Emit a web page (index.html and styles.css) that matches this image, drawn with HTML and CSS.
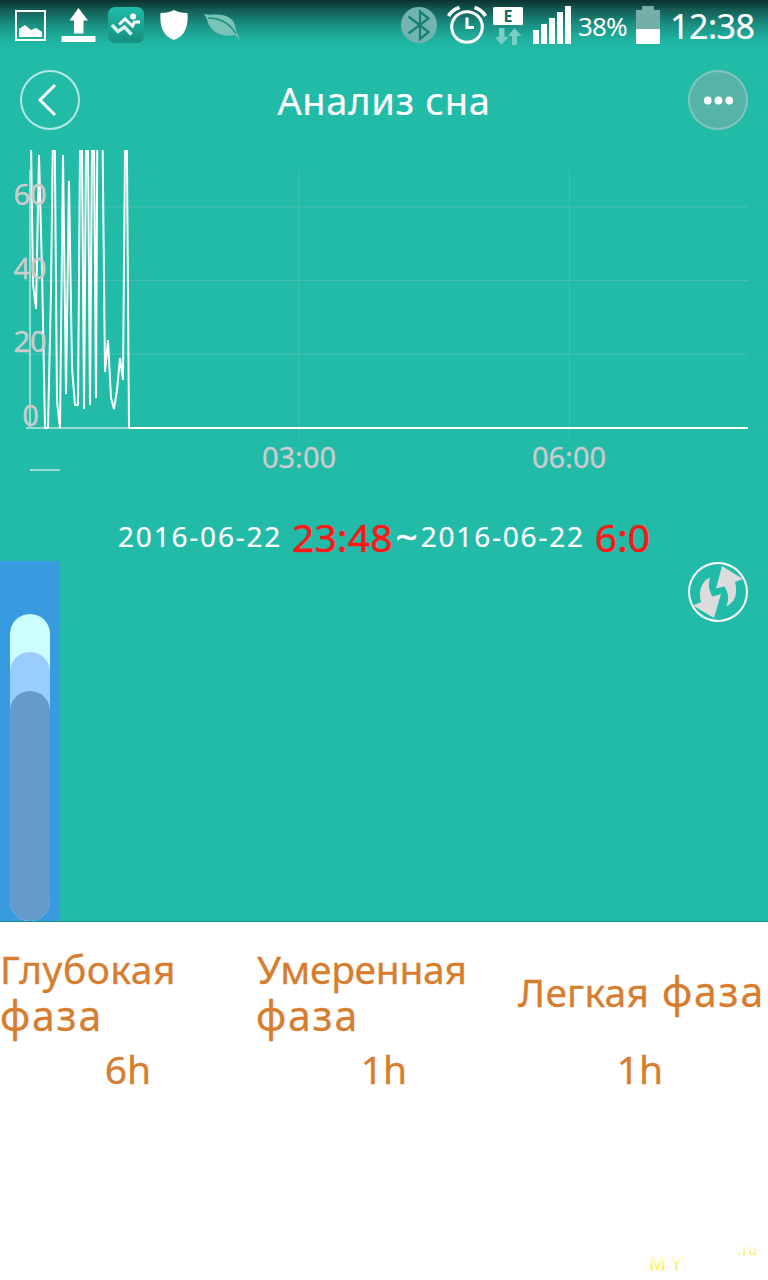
FILE: index.html
```html
<!DOCTYPE html>
<html lang="ru">
<head>
<meta charset="UTF-8">
<meta name="viewport" content="width=device-width, initial-scale=1.0">
<title>Анализ сна</title>
<link rel="stylesheet" href="styles.css">
</head>
<body>

  <div class="top">
    <div class="status-bar">
      <svg class="status-left" width="256" height="50" viewBox="0 0 256 50">
        <defs>
          <linearGradient id="app" x1="0" y1="0" x2="0" y2="1">
            <stop offset="0" stop-color="#21bba9"/>
            <stop offset="1" stop-color="#168f81"/>
          </linearGradient>
        </defs>
        <rect x="16" y="11" width="29" height="29" fill="none" stroke="#fff" stroke-width="2"/>
        <path d="M19 37V29L25 25L31 30L36 28L42 32V37Z" fill="#fff"/>
        <path d="M78.500 8L88 20.500H83.500V33.500H74V20.500H69.500ZM61.500 36H95.500V42H61.500Z" fill="#fff"/>
        <rect x="108" y="7" width="36" height="36" rx="7" fill="url(#app)"/>
        <path d="M119 24.500L125 19L132.500 26L134.500 22H140" fill="none" stroke="#fff" stroke-width="3"/>
        <path d="M112 25L118 31.500L124.500 27L131.500 34.500" fill="none" stroke="#d6f1ee" stroke-width="3.500"/>
        <circle cx="133" cy="16.500" r="3" fill="#fff"/>
        <path d="M174 10Q179 13 187.500 13C188.500 26 185 36 174 40C163 36 159.500 26 160.500 13Q169 13 174 10Z" fill="#fff"/>
        <path d="M204 14C211 16 222 12 231 19C236 23 235 29 237 33L240 40L235 35C225 37 216 34 212 29C207 24 208 19 204 14Z" fill="#79c3b8"/>
        <path d="M208 18C219 18 229 22 236 34" fill="none" stroke="#1d8f83" stroke-width="1.400"/>
      </svg>
      <div class="status-right">
        <svg width="184" height="50" viewBox="398 0 184 50">
          <circle cx="419" cy="25" r="18" fill="#72b5ae"/>
          <path d="M408.500 16.500L428.500 32L420 39V11.500L428.500 18.500L408.500 33.500" fill="none" stroke="#177f75" stroke-width="2.300"/>
          <g fill="none" stroke="#fff">
            <circle cx="467" cy="27" r="15.300" stroke-width="3"/>
            <path d="M467 17.500V27.500H474" stroke-width="3"/>
            <path d="M448.500 16Q452 10 459.500 7.500M485.500 16Q482 10 474.500 7.500" stroke-width="3.500"/>
          </g>
          <rect x="493" y="7" width="30" height="18" rx="1.500" fill="#fff"/>
          <text class="net-text" x="508" y="21.500">E</text>
          <path d="M499 28H504.500V37H508.500L501.500 45L495 37H499ZM512 45V36H508L514.500 28L521.500 36H517V45Z" fill="#79cdc2"/>
          <path d="M533 30H539V44H533ZM541 24H547V44H541ZM549 18H555V44H549ZM557 12H563V44H557ZM565 6H571V44H565Z" fill="#fff"/>
        </svg>
        <span class="percent">38%</span>
        <svg class="battery" width="24" height="50" viewBox="0 0 24 50">
          <path d="M6 6H18V10H24V44H0V10H6Z" fill="#74aea8"/>
          <path d="M0 29H24V44H0Z" fill="#fff"/>
        </svg>
        <span class="clock">12:38</span>
      </div>
    </div>

    <div class="header">
      <div class="round-button back">
        <svg width="60" height="60" viewBox="0 0 60 60">
          <path d="M35 15L20 30L35 45" fill="none" stroke="#fff" stroke-width="3"/>
        </svg>
      </div>
      <h1 class="title">Анализ сна</h1>
      <div class="round-button more">
        <svg width="60" height="60" viewBox="0 0 60 60" fill="#fff">
          <circle cx="19.700" cy="30.500" r="3.900"/>
          <circle cx="30.500" cy="30.500" r="3.900"/>
          <circle cx="41.200" cy="30.500" r="3.900"/>
        </svg>
      </div>
    </div>

    <svg class="chart" width="768" height="350" viewBox="0 150 768 350">
      <g class="grid">
        <path d="M26 207H748M26 280.500H748M26 354H748M299 170V438M569.500 170V438"/>
      </g>
      <path class="axis" d="M30 170V428M26 428H130M30 470H60"/>
      <path class="line" d="M31 140L33 284L36 309L39 155L42 270L45 428H48L51 290L54 50L57 402L60 428L63 155L66 394L69 181L72 368L75 405H78L81 20L84 409L87 20L90 405L93 20L96 398L99 -200L102 90L105 372L108 340L111 398L114 409L117 390L120 358L123 380L126 30L129 428H748"/>
      <g class="labels">
        <text x="30" y="205">60</text>
        <text x="30" y="279">40</text>
        <text x="30" y="352">20</text>
        <text x="30.500" y="426">0</text>
        <text x="299" y="468">03:00</text>
        <text x="569" y="468">06:00</text>
      </g>
    </svg>

    <div class="period">
      <span class="date">2016-06-22</span>
      <span class="time">23:48</span>
      <span class="tilde">~</span>
      <span class="date">2016-06-22</span>
      <span class="time">6:0</span>
    </div>

    <div class="phases">
      <div class="bar-column">
        <div class="bar light">
          <div class="bar medium">
            <div class="bar deep"></div>
          </div>
        </div>
      </div>
      <div class="round-button refresh">
        <svg width="60" height="60" viewBox="0 0 60 60">
          <path d="M34 4L55 17L47 20C50 33 47 40 38 44.500C42 37 40 30 36.500 24.500L28 26.500Z" fill="#dcdcdc"/>
          <path d="M26 56L5 43.500L13 40C10 28 14 19 22 15.500C20 23 21 29 24.500 34.500L33 32Z" fill="#dcdcdc"/>
        </svg>
      </div>
    </div>
  </div>

  <div class="summary">
    <div class="item">
      <div class="name">
        <span class="deep-text">Глубокая</span>
        <span class="phase-text">фаза</span>
      </div>
      <div class="value">6h</div>
    </div>
    <div class="item">
      <div class="name">
        <span class="medium-text">Умеренная</span>
        <span class="phase-text">фаза</span>
      </div>
      <div class="value">1h</div>
    </div>
    <div class="item">
      <div class="name single">
        <span class="light-text">Легкая</span>
        <span class="phase-text">фаза</span>
      </div>
      <div class="value">1h</div>
    </div>
  </div>

  <div class="watermark">
    <span class="mark">MY</span>
    <span class="domain">.ru</span>
  </div>

</body>
</html>
```
FILE: styles.css
```css
* {
  box-sizing: border-box;
  margin: 0;
  padding: 0;
}

body {
  width: 768px;
  height: 1280px;
  overflow: hidden;
  display: flex;
  flex-direction: column;
  font-family: "Noto Sans", sans-serif;
  color: #fff;
  background-color: #fff;
}

svg {
  display: block;
  flex: none;
}

.top {
  height: 922px;
  background-color: #21bba8;
  border-bottom: 1px solid #168f8c;
}

/* Status Bar */

.status-bar {
  height: 50px;
  display: flex;
  justify-content: space-between;
  background: linear-gradient(#0c302e 0, #145d56 10px, #1a8e81 24px, #20b3a1 40px, #21bba8 50px);
}

.status-right {
  display: flex;
  width: 370px;
  line-height: 50px;
  white-space: nowrap;
}

.net-text {
  font-size: 16px;
  font-weight: bold;
  text-anchor: middle;
  fill: #176e65;
}

.percent {
  width: 54px;
  margin-left: -4px;
  font-size: 26px;
  line-height: 52px;
  letter-spacing: -0.9px;
}

.battery {
  margin-left: 4px;
}

.clock {
  margin-left: 10px;
  font-size: 34px;
  line-height: 52px;
  letter-spacing: -0.5px;
  -webkit-text-stroke: 0.2px #fff;
}

/* Header */

.header {
  height: 100px;
  padding: 0 20px;
  display: flex;
  align-items: center;
  justify-content: space-between;
}

.round-button {
  width: 60px;
  height: 60px;
  border-radius: 50%;
  box-shadow: inset 0 0 0 2px #b6e8e1;
}

.more {
  background-color: #55b3a8;
  box-shadow: inset 0 0 0 2px #81c5bc;
}

.title {
  font-size: 38px;
  font-weight: normal;
  letter-spacing: 0.7px;
  -webkit-text-stroke: 0.2px #fff;
}

/* Chart */

.chart {
  overflow: hidden;
}

.grid {
  fill: none;
  stroke: #4bbdae;
  stroke-width: 1;
}

.axis {
  fill: none;
  stroke: #98dcd3;
  stroke-width: 2;
}

.line {
  fill: none;
  stroke: #fff;
  stroke-width: 2;
  stroke-linejoin: bevel;
}

.labels {
  font-size: 29px;
  text-anchor: middle;
  fill: #ccc;
  stroke: #ccc;
  stroke-width: 0.3px;
}

/* Period */

.period {
  height: 61px;
  padding-left: 118px;
  display: flex;
  line-height: 73px;
  white-space: nowrap;
}

.date {
  width: 174px;
  font-size: 28px;
  letter-spacing: 1.8px;
  line-height: 72px;
  -webkit-text-stroke: 0.2px #fff;
}

.time {
  font-size: 39px;
  letter-spacing: 0.2px;
  color: #ff1616;
  -webkit-text-stroke: 0.5px #ff1616;
}

.tilde {
  width: 28px;
  padding-left: 3px;
  font-size: 38px;
  -webkit-text-stroke: 0.6px #fff;
}

/* Phases */

.phases {
  height: 360px;
  display: flex;
  justify-content: space-between;
  padding-right: 20px;
}

.bar-column {
  width: 60px;
  padding: 53px 10px 0;
  background-color: #399bdf;
}

.bar {
  border-radius: 20px;
}

.light {
  height: 307px;
  padding-top: 38px;
  background-color: #cff;
}

.medium {
  height: 269px;
  padding-top: 39px;
  background-color: #9cf;
}

.deep {
  height: 230px;
  background-color: #69c;
}

.refresh {
  margin-top: 1px;
  box-shadow: inset 0 0 0 2px #fff;
}

/* Summary */

.summary {
  height: 318px;
  padding-top: 23px;
  display: grid;
  grid-template-columns: repeat(3, 256px);
  color: #d67d30;
  font-size: 39px;
  -webkit-text-stroke: 0.3px #d67d30;
}

.name {
  height: 94px;
  display: flex;
  flex-direction: column;
  line-height: 47px;
}

.single {
  flex-direction: row;
  align-items: center;
  justify-content: space-between;
  padding: 0 5px 2px 6px;
}

.deep-text {
  letter-spacing: 0.5px;
}

.medium-text {
  padding-left: 1px;
  letter-spacing: -0.3px;
}

.light-text {
  letter-spacing: 0.2px;
}

.phase-text {
  font-size: 41px;
  letter-spacing: 1.8px;
}

.single .phase-text {
  margin-right: -2px;
}

.value {
  line-height: 59px;
  text-align: center;
}

.watermark {
  height: 40px;
  padding-left: 649px;
  display: flex;
  font-family: "Liberation Sans", sans-serif;
  font-weight: bold;
}

.mark {
  width: 88px;
  font-size: 20px;
  line-height: 47px;
  letter-spacing: 4px;
  color: transparent;
  background: linear-gradient(#fff 14px, #faef60 30px);
  background-clip: text;
}

.domain {
  font-size: 14px;
  line-height: 21px;
  letter-spacing: 1px;
  color: transparent;
  background: linear-gradient(#fff 3px, #faef60 16px);
  background-clip: text;
}
```
